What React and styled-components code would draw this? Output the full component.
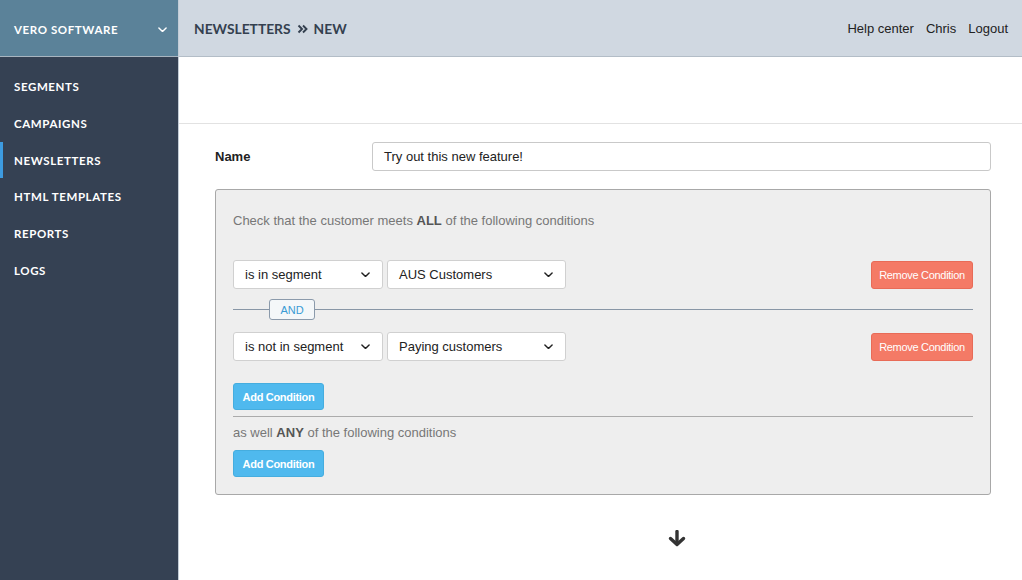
import React from "react";
import styled, {createGlobalStyle} from "styled-components";

const GlobalStyle = createGlobalStyle`
  html, body {
    margin: 0;
    padding: 0;
    background: #ffffff;
  }
  body {
    font-family: "Liberation Sans", Arial, sans-serif;
  }
`;

const Layout = styled.div`
  display: flex;
  width: 1022px;
  height: 580px;
  overflow: hidden;
`;

const Sidebar = styled.aside`
  width: 178px;
  flex-shrink: 0;
  background: #354153;
  border-right: 1px solid #c3ccd6;
  display: flex;
  flex-direction: column;
`;

const Brand = styled.div`
  height: 57px;
  background: #5b8299;
  border-bottom: 1px solid #a9b5c0;
  box-sizing: border-box;
  display: flex;
  align-items: center;
  justify-content: space-between;
  padding: 3px 11px 0 14px;
  color: #fff;
  font-family: Lato, "Open Sans", sans-serif;
  font-weight: 700;
  font-size: 11.5px;
  letter-spacing: 0.6px;
`;

const NavList = styled.nav`
  display: flex;
  flex-direction: column;
  padding-top: 11px;
`;

const NavItem = styled.a`
  display: block;
  height: 36.8px;
  line-height: 37px;
  padding-left: 14px;
  color: #fff;
  font-family: Lato, "Open Sans", sans-serif;
  font-weight: 700;
  font-size: 11.5px;
  letter-spacing: 0.6px;
  text-decoration: none;
  box-shadow: ${p => (p.$active ? "inset 3px 0 0 #3d9be0" : "none")};
`;

const Main = styled.main`
  flex: 1;
  display: flex;
  flex-direction: column;
`;

const TopBar = styled.header`
  height: 57px;
  box-sizing: border-box;
  background: #d0d8e1;
  border-bottom: 1px solid #b3bdc7;
  display: flex;
  align-items: center;
  justify-content: space-between;
  padding: 1px 14px 0 15px;
`;

const Crumb = styled.h1`
  margin: 0;
  font-family: Lato, "Open Sans", sans-serif;
  font-weight: 700;
  font-size: 13.8px;
  color: #34404f;
  display: flex;
  align-items: center;
  gap: 6px;
`;

const TopLinks = styled.div`
  display: flex;
  gap: 12px;
  font-size: 13px;
  color: #222;
`;

const Spacer = styled.div`
  height: 66px;
  border-bottom: 1px solid #e2e2e2;
`;

const Content = styled.div`
  padding: 18px 31px 0 36px;
`;

const FieldRow = styled.div`
  display: flex;
  align-items: center;
  margin-bottom: 18px;
`;

const Label = styled.label`
  width: 157px;
  font-size: 13px;
  font-weight: 700;
  color: #222;
`;

const TextInput = styled.div`
  flex: 1;
  height: 29px;
  box-sizing: border-box;
  border: 1px solid #c9c9c9;
  border-radius: 3px;
  background: #fff;
  display: flex;
  align-items: center;
  padding-left: 11px;
  font-size: 13px;
  color: #222;
`;

const Panel = styled.section`
  background: #eeeeee;
  border: 1px solid #a8a8a8;
  border-radius: 3px;
  padding: 23px 17px 17px 17px;
`;

const Hint = styled.p`
  margin: 0 0 ${p => p.$gap || 0}px 0;
  font-size: 13px;
  color: #777;
  b { color: #555; }
`;

const ConditionRow = styled.div`
  display: flex;
  align-items: center;
  gap: 4px;
`;

const Select = styled.div`
  width: ${p => p.$w}px;
  height: 29px;
  box-sizing: border-box;
  border: 1px solid #d0d0d0;
  border-radius: 3px;
  background: #fff;
  display: flex;
  align-items: center;
  justify-content: space-between;
  padding: 0 12px 0 11px;
  font-size: 13px;
  color: #222;
`;

const RemoveButton = styled.button`
  margin-left: auto;
  height: 28px;
  width: 102px;
  padding: 0;
  border: 1px solid #e86b57;
  border-radius: 3px;
  background: #f47a66;
  color: #fff;
  font-family: "Liberation Sans", Arial, sans-serif;
  font-size: 11px;
  letter-spacing: -0.3px;
`;

const AddButton = styled.button`
  display: block;
  height: 27px;
  width: 91px;
  padding: 0;
  margin-top: ${p => p.$top || 0}px;
  border: 1px solid #45addf;
  border-radius: 3px;
  background: #4fb9ee;
  color: #fff;
  font-family: "Liberation Sans", Arial, sans-serif;
  font-size: 11px;
  font-weight: 700;
  letter-spacing: -0.3px;
`;

const Joiner = styled.div`
  display: flex;
  align-items: center;
  height: 21px;
  margin: 10px 0 12px 0;
  &::before {
    content: "";
    width: 36px;
    border-top: 1px solid #8896a6;
  }
  &::after {
    content: "";
    flex: 1;
    border-top: 1px solid #8896a6;
  }
`;

const JoinTag = styled.span`
  height: 21px;
  width: 46px;
  box-sizing: border-box;
  border: 1px solid #8b9aab;
  border-radius: 3px;
  background: #f4f7f9;
  color: #3a9bd5;
  font-size: 11px;
  display: flex;
  align-items: center;
  justify-content: center;
`;

const Divider = styled.hr`
  border: 0;
  border-top: 1px solid #ababab;
  margin: 6px 0 8px 0;
`;

const Footer = styled.div`
  display: flex;
  justify-content: center;
  padding-top: 35px;
  padding-left: 148px;
`;

const Chevron = ({size = 9, color = "#222"}) => (
    <svg width={size} height={size * 0.65} viewBox="0 0 10 6.5">
        <path d="M1 1l4 4 4-4" fill="none" stroke={color} strokeWidth="1.6" strokeLinecap="round" strokeLinejoin="round"/>
    </svg>
);

const DoubleChevron = () => (
    <svg width="11" height="10" viewBox="0 0 11 10">
        <path d="M1.5 1.5l3.5 3.5-3.5 3.5M6 1.5l3.5 3.5-3.5 3.5" fill="none" stroke="#34404f" strokeWidth="1.9"/>
    </svg>
);

const ArrowDown = () => (
    <svg width="18" height="17" viewBox="0 0 18 17">
        <path d="M9 1.5v12" stroke="#333" strokeWidth="3.4" strokeLinecap="round"/>
        <path d="M2.5 8.5L9 14.5 15.5 8.5" fill="none" stroke="#333" strokeWidth="3.4" strokeLinecap="round" strokeLinejoin="round"/>
    </svg>
);

const navItems = ["SEGMENTS", "CAMPAIGNS", "NEWSLETTERS", "HTML TEMPLATES", "REPORTS", "LOGS"];

const conditions = [
    {op: "is in segment", segment: "AUS Customers"},
    {op: "is not in segment", segment: "Paying customers"}
];

const Condition = ({op, segment}) => (
    <ConditionRow>
        <Select $w={150}>{op}<Chevron/></Select>
        <Select $w={179}>{segment}<Chevron/></Select>
        <RemoveButton>Remove Condition</RemoveButton>
    </ConditionRow>
);

const App = () => {
    return (
        <Layout>
            <GlobalStyle/>
            <Sidebar>
                <Brand>
                    VERO SOFTWARE
                    <Chevron size={9} color="#fff"/>
                </Brand>
                <NavList>
                    {navItems.map(item => (
                        <NavItem key={item} $active={item === "NEWSLETTERS"}>{item}</NavItem>
                    ))}
                </NavList>
            </Sidebar>
            <Main>
                <TopBar>
                    <Crumb>NEWSLETTERS <DoubleChevron/> NEW</Crumb>
                    <TopLinks>
                        <span>Help center</span>
                        <span>Chris</span>
                        <span>Logout</span>
                    </TopLinks>
                </TopBar>
                <Spacer/>
                <Content>
                    <FieldRow>
                        <Label>Name</Label>
                        <TextInput>Try out this new feature!</TextInput>
                    </FieldRow>
                    <Panel>
                        <Hint $gap={32}>Check that the customer meets <b>ALL</b> of the following conditions</Hint>
                        <Condition {...conditions[0]}/>
                        <Joiner><JoinTag>AND</JoinTag></Joiner>
                        <Condition {...conditions[1]}/>
                        <AddButton $top={22}>Add Condition</AddButton>
                        <Divider/>
                        <Hint $gap={10}>as well <b>ANY</b> of the following conditions</Hint>
                        <AddButton>Add Condition</AddButton>
                    </Panel>
                    <Footer><ArrowDown/></Footer>
                </Content>
            </Main>
        </Layout>
    );
};

export default App;
